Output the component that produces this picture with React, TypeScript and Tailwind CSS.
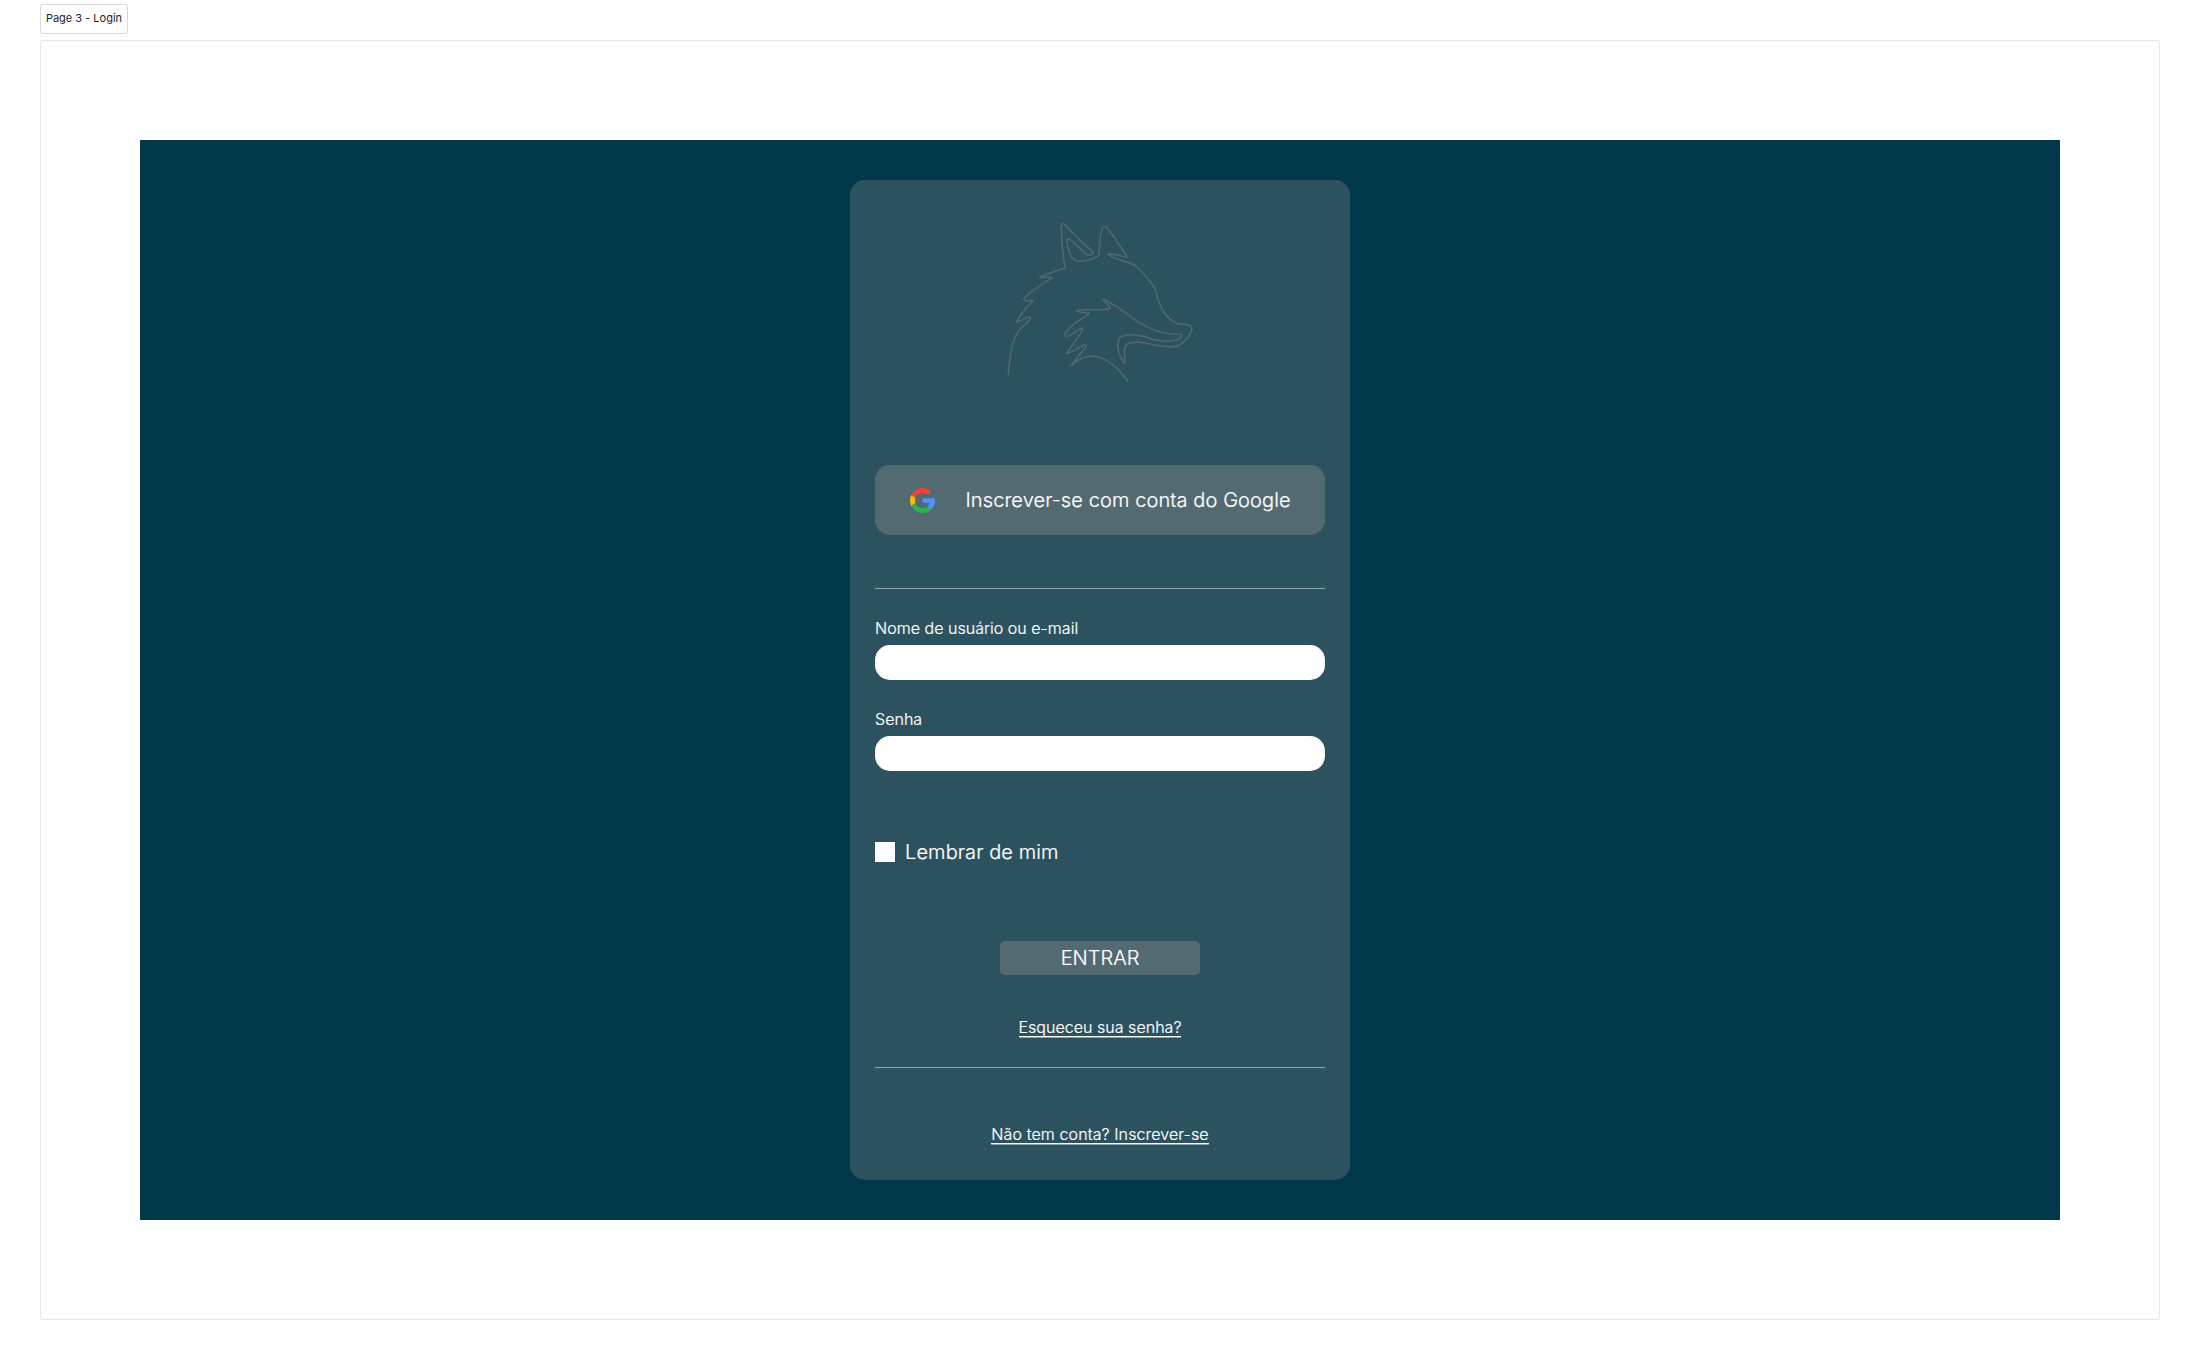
import type { ReactNode } from "react";

function FoxLogo() {
  return (
    <svg
      viewBox="0 0 660 540"
      className="mx-auto mt-[30px] h-[180px] w-[220px]"
      fill="none"
      stroke="#536675"
      strokeWidth="4.6"
      strokeLinecap="round"
      strokeLinejoin="round"
      aria-label="Fox"
    >
      <path d="M55 491 C60 430 67 375 98 350 C110 338 120 332 121 323 C117 315 106 328 80 336 C88 315 104 300 129 272 C122 270 105 276 101 267 C112 250 145 230 187 203 C175 199 163 205 149 202 C166 193 195 184 226 174 C219 140 214 85 214 50 C214 41 219 38 225 44 C250 72 275 96 305 122 C312 130 308 136 296 135 C284 136 262 104 242 90 C236 84 229 88 231 96 C236 125 243 149 259 152 C282 155 307 149 327 136 C329 110 328 78 336 56 C341 46 346 47 352 54 C372 79 390 108 410 138 C413 144 404 142 398 139 C384 134 368 131 353 133 C372 148 408 153 434 165 C456 182 474 206 490 228 C501 244 500 256 504 270 C514 298 531 327 558 339 C575 344 588 342 598 346 C606 350 607 358 603 366 C597 381 588 391 573 402 C552 415 515 410 488 404 C460 397 426 389 409 405 C397 416 406 442 404 460 C397 455 387 435 385 420 C382 402 383 389 393 380 C415 368 447 375 475 383 C504 395 552 398 572 383 C579 373 578 371 567 373 C517 374 469 353 438 332 C406 306 368 281 334 264 C345 276 360 288 361 295 C353 301 321 297 292 299 C279 300 268 298 259 303 C269 309 285 306 298 309 C286 323 250 334 225 371 C222 380 228 381 240 376 C252 370 267 355 278 354 C282 356 266 380 253 397 C245 410 236 420 229 431 C243 429 265 411 284 405 C293 405 288 413 279 420 C268 435 255 456 239 470 C264 448 285 437 309 438 C356 442 388 477 414 514" />
      <path stroke="#3f4c5c" d="M334 264 l3 2 M238 470 l3 -2" />
    </svg>
  );
}

function GoogleLogo() {
  return (
    <svg viewBox="0 0 48 48" className="size-[25px]" aria-label="Google">
      <path fill="#f44336" d="M24 9.6c3.6 0 6.7 1.2 9.2 3.6l6.9-6.9C35.9 2.4 30.5 0 24 0 14.6 0 6.5 5.4 2.6 13.2l8 6.2C12.5 13.7 17.7 9.6 24 9.6z" />
      <path fill="#5290fa" d="M48 19.6H24v9.3h13.2c-.6 3-2.3 5.5-4.8 7.2l7.7 6C44.6 37.9 48 31.7 48 24.500z" />
      <path fill="#fbbc05" d="M10.5 28.6c-.5-1.5-.8-3-.8-4.6s.3-3.1.8-4.6l-8-6.2C.9 16.5 0 20.1 0 24s.9 7.5 2.6 10.8z" />
      <path fill="#2cb34b" d="M24 48c6.5 0 11.9-2.1 15.9-5.8l-7.7-6c-2.2 1.5-4.9 2.3-8.2 2.3-6.3 0-11.5-4.2-13.4-9.9l-8 6.2C6.5 42.6 14.6 48 24 48z" />
    </svg>
  );
}

function Divider({ className }: { className: string }) {
  return <div className={`h-px shrink-0 bg-[#91a8ac] ${className}`} />;
}

function Field({ label, type, className }: { label: string; type: string; className: string }) {
  return (
    <label className={`flex flex-col gap-[5px] text-base leading-6 tracking-[0.03px] ${className}`}>
      <span>{label}</span>
      <input type={type} className="h-[35px] rounded-[15px] bg-white px-4 text-black" />
    </label>
  );
}

function TextLink({ children, className }: { children: ReactNode; className: string }) {
  return (
    <a
      href="#"
      className={`h-[22px] self-center border-b border-white text-base leading-6 whitespace-nowrap shadow-[0_1px_0_rgba(255,255,255,0.45)] ${className}`}
    >
      {children}
    </a>
  );
}

export default function App() {
  return (
    <div className="h-[1360px] w-[2200px] overflow-hidden bg-white px-10 pt-1 font-['Inter',sans-serif]">
      <div className="flex h-[30px] w-[88px] items-center justify-center rounded-[3px] border border-[#d9d9d9] pb-[2px] text-[11px] whitespace-nowrap text-[#1e1e1e]">
        Page 3 - Login
      </div>
      <div className="mt-[6px] flex h-[1280px] w-[2120px] items-center justify-center rounded-[2px] border border-[#e6e6e6]">
        <main className="flex h-[1080px] w-[1920px] items-center justify-center bg-[#003849]">
          <form className="flex h-[1000px] w-[500px] flex-col rounded-[15px] bg-[#2d525f] px-[25px] font-light text-white [-webkit-text-stroke:0.2px_white]">
            <FoxLogo />
            <button
              type="button"
              className="mt-[75px] flex h-[70px] shrink-0 items-center rounded-[15px] bg-[#546a72] pl-[35px] text-xl"
            >
              <GoogleLogo />
              <span className="ml-[30.5px] tracking-[0.1px] whitespace-nowrap">Inscrever-se com conta do Google</span>
            </button>
            <Divider className="mt-[53px]" />
            <Field label="Nome de usuário ou e-mail" type="text" className="mt-[27px]" />
            <Field label="Senha" type="password" className="mt-[27px]" />
            <label className="mt-[71px] flex h-5 items-center gap-[10px] text-xl tracking-[0.1px]">
              <input type="checkbox" className="size-5 appearance-none bg-white" />
              Lembrar de mim
            </label>
            <button type="submit" className="mt-[79px] h-[34px] w-[200px] self-center rounded-[5px] bg-[#546a72] text-xl">
              ENTRAR
            </button>
            <TextLink className="mt-10 tracking-[0.03px]">Esqueceu sua senha?</TextLink>
            <Divider className="mt-[30px]" />
            <TextLink className="mt-[54px] tracking-[0.11px]">Não tem conta? Inscrever-se</TextLink>
          </form>
        </main>
      </div>
    </div>
  );
}
